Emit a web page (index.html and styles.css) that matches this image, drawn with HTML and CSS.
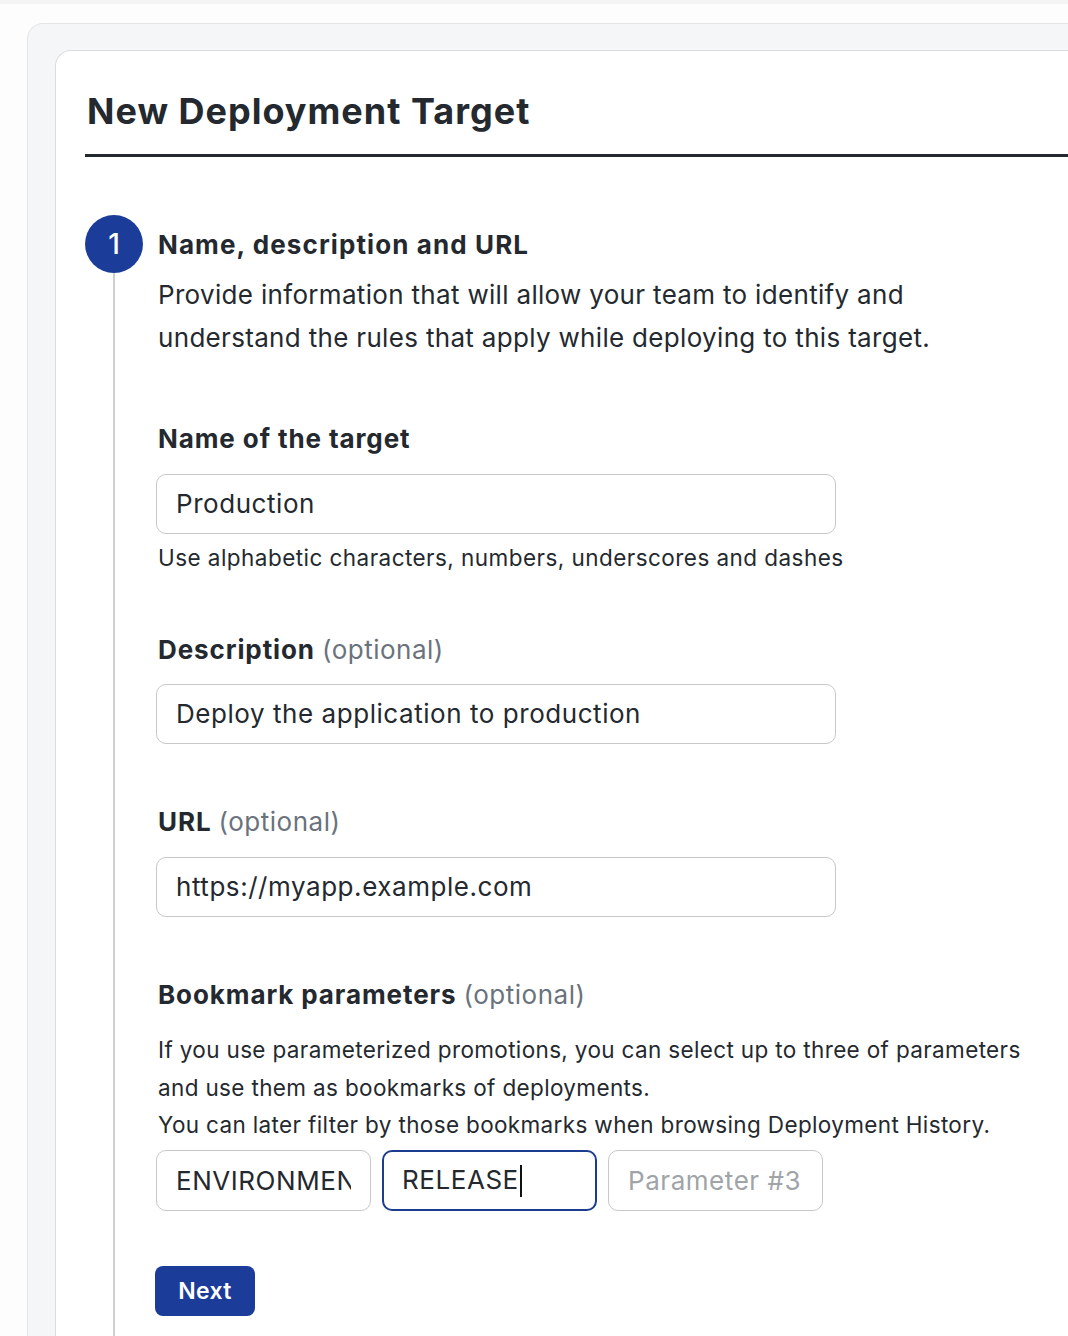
FILE: index.html
```html
<!DOCTYPE html>
<html>
<head>
<meta charset="utf-8">
<link rel="stylesheet" href="styles.css">
</head>
<body>
<div class="topstrip"></div>
<div class="panel">
  <div class="card">
    <h1 class="title">New Deployment Target</h1>
    <div class="step">
      <div class="rail">
        <div class="num">1</div>
        <div class="line"></div>
      </div>
      <div class="content">
        <h2 class="step-title">Name, description and URL</h2>
        <p class="intro">Provide information that will allow your team to identify and understand the rules that apply while deploying to this target.</p>

        <div class="field f-name">
          <label class="label">Name of the target</label>
          <div class="input">Production</div>
          <div class="help">Use alphabetic characters, numbers, underscores and dashes</div>
        </div>

        <div class="field f-desc">
          <label class="label">Description <span class="opt">(optional)</span></label>
          <div class="input">Deploy the application to production</div>
        </div>

        <div class="field f-url">
          <label class="label">URL <span class="opt">(optional)</span></label>
          <div class="input">https://myapp.example.com</div>
        </div>

        <div class="field f-book">
          <label class="label">Bookmark parameters <span class="opt">(optional)</span></label>
          <p class="bk-text">If you use parameterized promotions, you can select up to three of parameters and use them as bookmarks of deployments.<br>You can later filter by those bookmarks when browsing Deployment History.</p>
          <div class="params">
            <div class="input small"><span class="val">ENVIRONMENT</span></div>
            <div class="input small focus"><span class="val">RELEASE<span class="caret"></span></span></div>
            <div class="input small ph"><span class="val">Parameter #3</span></div>
          </div>
        </div>

        <button class="next">Next</button>
      </div>
    </div>
  </div>
</div>
</body>
</html>
```

FILE: styles.css
```css
html, body {
  margin: 0;
  padding: 0;
  background: #fdfdfd;
  font-family: Inter, "Noto Sans", sans-serif;
  color: #24292f;
  overflow: hidden;
  height: 1336px;
}
.topstrip {
  height: 4px;
  background: #f4f4f4;
}
.panel {
  margin: 19px 0 0 27px;
  background: #f5f6f7;
  border: 1px solid #e6e6e6;
  border-right: none;
  border-bottom: none;
  border-radius: 16px 0 0 0;
  padding: 26px 0 0 27px;
  height: 1400px;
}
.card {
  background: #ffffff;
  border: 1px solid #dcdcdc;
  border-right: none;
  border-bottom: none;
  border-radius: 16px 0 0 0;
  padding: 0 0 0 29px;
  height: 1400px;
}
.title {
  margin: 0;
  padding: 39px 0 0 2px;
  height: 64px;
  font-size: 36px;
  font-weight: 700;
  line-height: 42px;
  letter-spacing: 1px;
  border-bottom: 3px solid #24292f;
}
.step {
  display: flex;
  gap: 15px;
  margin-top: 58px;
}
.rail {
  width: 58px;
  display: flex;
  flex-direction: column;
  align-items: center;
  flex: none;
}
.num {
  width: 58px;
  height: 58px;
  border-radius: 50%;
  background: #1b3c99;
  color: #fff;
  font-size: 28px;
  font-weight: 500;
  display: flex;
  align-items: center;
  justify-content: center;
}
.line {
  width: 2px;
  background: #cfcfcf;
  height: 1200px;
}
.content {
  flex: 1;
}
.step-title {
  margin: 14px 0 0;
  font-size: 26px;
  line-height: 32px;
  font-weight: 700;
  letter-spacing: 1.1px;
}
.intro {
  margin: 12px 0 0;
  font-size: 26px;
  line-height: 43px;
  width: 800px;
  letter-spacing: 0.32px;
}
.label {
  display: block;
  font-size: 26px;
  font-weight: 700;
  line-height: 32px;
  letter-spacing: 0.9px;
}
.opt {
  font-weight: 400;
  color: #6a737d;
  letter-spacing: 0.5px;
}
.f-name { margin-top: 64px; }
.f-desc { margin-top: 61px; }
.f-url { margin-top: 62px; }
.f-book { margin-top: 62px; }
.input {
  box-sizing: border-box;
  width: 680px;
  height: 60px;
  margin-top: 19px;
  margin-left: -2px;
  border: 1px solid #c8c8c8;
  border-radius: 10px;
  padding: 0 19px;
  font-size: 26px;
  line-height: 58px;
  white-space: nowrap;
  overflow: hidden;
  letter-spacing: 0.55px;
}
.f-desc .input { margin-top: 18px; }
.f-url .input { margin-top: 19px; }
.help {
  font-size: 22.5px;
  line-height: 30px;
  margin-top: 9px;
  letter-spacing: 0.45px;
}
.bk-text {
  margin: 20px 0 0;
  font-size: 22.5px;
  line-height: 37.5px;
  letter-spacing: 0.35px;
  width: 870px;
}
.params {
  display: flex;
  gap: 11px;
  margin-top: 6px;
  margin-left: -2px;
}
.input.small {
  width: 215px;
  margin: 0;
  height: 61px;
  padding: 0 19px;
  line-height: 59px;
}
.val {
  display: block;
  overflow: hidden;
  white-space: nowrap;
}
.focus {
  border: 2.5px solid #1b3c8f;
  line-height: 56px;
}
.input.small.focus { line-height: 56px; padding: 0 18px; }
.caret {
  display: inline-block;
  width: 2px;
  height: 32px;
  background: #111;
  vertical-align: middle;
  margin-left: 1px;
}
.ph { color: #a0a4a8; }
.next {
  display: block;
  margin-top: 55px;
  margin-left: -3px;
  width: 100px;
  height: 50px;
  border: none;
  border-radius: 8px;
  background: #1b3c99;
  color: #fff;
  font-family: Inter, sans-serif;
  font-size: 23px;
  font-weight: 600;
  letter-spacing: 0.3px;
}
```
